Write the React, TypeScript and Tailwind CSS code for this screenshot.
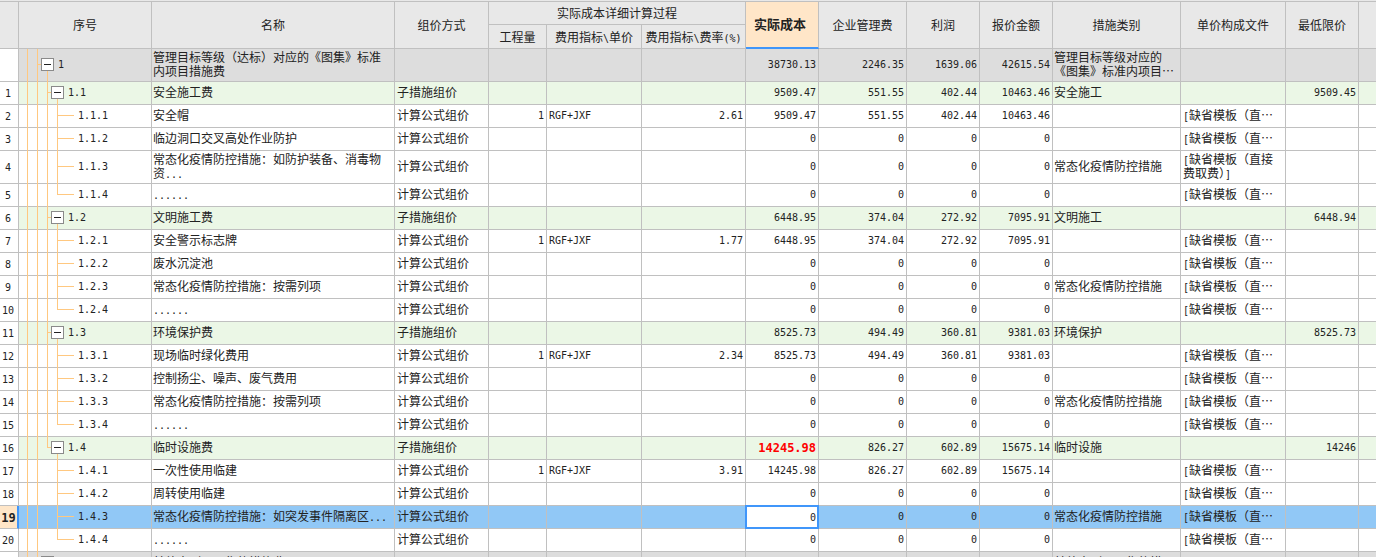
import { Fragment } from "react";
import { clsx } from "clsx";

type Kind = "root" | "section" | "item";

interface Row {
  no: string;
  kind: Kind;
  code: string;
  name: string;
  method?: string;
  qty?: string;
  basis?: string;
  rate?: string;
  amounts: string[];
  category?: string;
  template?: string;
  floor?: string;
  last?: boolean;
  tall?: boolean;
  alert?: boolean;
  selected?: boolean;
}

const FORMULA = "计算公式组价";
const SUB = "子措施组价";
const TEMPLATE = "[缺省模板（直…";
const EPIDEMIC = "常态化疫情防控措施";
const ZERO = ["0", "0", "0", "0"];

const rows: Row[] = [
  { no: "", kind: "root", code: "1", name: "管理目标等级（达标）对应的《图集》标准\n内项目措施费", amounts: ["38730.13", "2246.35", "1639.06", "42615.54"], category: "管理目标等级对应的\n《图集》标准内项目…", tall: true },
  { no: "1", kind: "section", code: "1.1", name: "安全施工费", method: SUB, amounts: ["9509.47", "551.55", "402.44", "10463.46"], category: "安全施工", floor: "9509.45" },
  { no: "2", kind: "item", code: "1.1.1", name: "安全帽", method: FORMULA, qty: "1", basis: "RGF+JXF", rate: "2.61", amounts: ["9509.47", "551.55", "402.44", "10463.46"], template: TEMPLATE },
  { no: "3", kind: "item", code: "1.1.2", name: "临边洞口交叉高处作业防护", method: FORMULA, amounts: ZERO, template: TEMPLATE },
  { no: "4", kind: "item", code: "1.1.3", name: "常态化疫情防控措施：如防护装备、消毒物\n资...", method: FORMULA, amounts: ZERO, category: EPIDEMIC, template: "[缺省模板（直接\n费取费）]", tall: true },
  { no: "5", kind: "item", code: "1.1.4", name: "......", method: FORMULA, amounts: ZERO, template: TEMPLATE, last: true },
  { no: "6", kind: "section", code: "1.2", name: "文明施工费", method: SUB, amounts: ["6448.95", "374.04", "272.92", "7095.91"], category: "文明施工", floor: "6448.94" },
  { no: "7", kind: "item", code: "1.2.1", name: "安全警示标志牌", method: FORMULA, qty: "1", basis: "RGF+JXF", rate: "1.77", amounts: ["6448.95", "374.04", "272.92", "7095.91"], template: TEMPLATE },
  { no: "8", kind: "item", code: "1.2.2", name: "废水沉淀池", method: FORMULA, amounts: ZERO, template: TEMPLATE },
  { no: "9", kind: "item", code: "1.2.3", name: "常态化疫情防控措施：按需列项", method: FORMULA, amounts: ZERO, category: EPIDEMIC, template: TEMPLATE },
  { no: "10", kind: "item", code: "1.2.4", name: "......", method: FORMULA, amounts: ZERO, template: TEMPLATE, last: true },
  { no: "11", kind: "section", code: "1.3", name: "环境保护费", method: SUB, amounts: ["8525.73", "494.49", "360.81", "9381.03"], category: "环境保护", floor: "8525.73" },
  { no: "12", kind: "item", code: "1.3.1", name: "现场临时绿化费用", method: FORMULA, qty: "1", basis: "RGF+JXF", rate: "2.34", amounts: ["8525.73", "494.49", "360.81", "9381.03"], template: TEMPLATE },
  { no: "13", kind: "item", code: "1.3.2", name: "控制扬尘、噪声、废气费用", method: FORMULA, amounts: ZERO, template: TEMPLATE },
  { no: "14", kind: "item", code: "1.3.3", name: "常态化疫情防控措施：按需列项", method: FORMULA, amounts: ZERO, category: EPIDEMIC, template: TEMPLATE },
  { no: "15", kind: "item", code: "1.3.4", name: "......", method: FORMULA, amounts: ZERO, template: TEMPLATE, last: true },
  { no: "16", kind: "section", code: "1.4", name: "临时设施费", method: SUB, amounts: ["14245.98", "826.27", "602.89", "15675.14"], category: "临时设施", floor: "14246", last: true, alert: true },
  { no: "17", kind: "item", code: "1.4.1", name: "一次性使用临建", method: FORMULA, qty: "1", basis: "RGF+JXF", rate: "3.91", amounts: ["14245.98", "826.27", "602.89", "15675.14"], template: TEMPLATE },
  { no: "18", kind: "item", code: "1.4.2", name: "周转使用临建", method: FORMULA, amounts: ZERO, template: TEMPLATE },
  { no: "19", kind: "item", code: "1.4.3", name: "常态化疫情防控措施：如突发事件隔离区...", method: FORMULA, amounts: ZERO, category: EPIDEMIC, template: TEMPLATE, selected: true },
  { no: "20", kind: "item", code: "1.4.4", name: "......", method: FORMULA, amounts: ZERO, template: TEMPLATE, last: true },
  { no: "", kind: "root", code: "2", name: "其他未列入图集的措施费", amounts: [], category: "其他未列入图集的措…" },
];

const MONO = "font-['DejaVu_Sans_Mono',monospace] text-[10px]";
const MONO_BOLD = "font-['DejaVu_Sans_Mono',monospace] text-[12px] font-bold";
const LINE = "border-r border-b border-[#c0c0c0]";
const HEAD = "border-r border-b border-[#c0c0c0] bg-[#e8e8e8] p-0 text-center font-normal";
const CELL = "border-r border-b border-[#c0c0c0] pt-0 pb-0.5 pl-px pr-0.5 whitespace-pre";

// Latin runs take the narrow monospace face, everything else the CJK face
function Mixed({ text }: { text: string }) {
  return (
    <>
      {text.split(/([\x21-\x7e]+)/).map((part, i) =>
        i % 2 ? (
          <span key={i} className={clsx(MONO, "leading-none")}>
            {part}
          </span>
        ) : (
          <Fragment key={i}>{part}</Fragment>
        )
      )}
    </>
  );
}

function TreeGuides({ row, inLastSection }: { row: Row; inLastSection: boolean }) {
  const h = row.tall ? 33 : 23;
  const mid = (h - 3) / 2;
  let d = `M8.5 0V${h}M18.5 0V${h}`;
  if (row.kind === "root") d += `M18 ${mid + 0.5}H22M28.5 ${mid + 6}V${h}`;
  if (row.kind === "section") d += `M28.5 0V${row.last ? mid + 1 : h}M28 ${mid + 0.5}H32M38.5 ${mid + 6}V${h}`;
  if (row.kind === "item") {
    if (!inLastSection) d += `M28.5 0V${h}`;
    d += `M38.5 0V${row.last ? mid + 1 : h}M38 ${mid + 0.5}H55`;
  }
  return (
    <svg width="60" height={h} className="col-start-1 row-start-1 -mb-px block" aria-hidden="true">
      <path d={d} fill="none" stroke="#ffc880" />
    </svg>
  );
}

function TreeCell({ row }: { row: Row }) {
  return (
    <td className={clsx(LINE, "p-0")}>
      <div className={clsx("grid", row.tall ? "h-8" : "h-[22px]")}>
        <TreeGuides row={row} inLastSection={row.code.startsWith("1.4")} />
        <div
          className={clsx(
            "col-start-1 row-start-1 flex items-center gap-1",
            row.tall ? "h-[31px]" : "h-[21px]",
            row.kind === "root" && "pl-[22px]",
            row.kind === "section" && "pl-8",
            row.kind === "item" && "pl-[59px]"
          )}
        >
          {row.kind !== "item" && (
            <button
              aria-label={`折叠 ${row.code}`}
              className="flex size-[13px] items-center justify-center border border-[#8a8a8a] bg-white"
            >
              <span className="h-px w-[7px] bg-[#222]" />
            </button>
          )}
          <span className={MONO}>{row.code}</span>
        </div>
      </div>
    </td>
  );
}

function Amount({ value, alert }: { value?: string; alert?: boolean }) {
  return (
    <td
      className={clsx(
        LINE,
        "py-0 pl-0 pr-0.5 text-right",
        alert ? MONO_BOLD : MONO,
        alert && "text-[#f00]"
      )}
    >
      {value}
    </td>
  );
}

function DataRow({ row }: { row: Row }) {
  return (
    <tr
      className={clsx(
        row.tall ? "h-[33px]" : "h-[23px]",
        row.selected && "bg-[#91c8f6]",
        !row.selected && row.kind === "root" && "bg-[#ddd]",
        !row.selected && row.kind === "section" && "bg-[#ebf7e6]",
        !row.selected && row.kind === "item" && "bg-white"
      )}
    >
      <th
        scope="row"
        className={clsx(
          "border-b border-b-[#c0c0c0] pt-0.5 pb-0 pl-0 text-center",
          row.selected ? MONO_BOLD : MONO,
          row.selected
            ? "border-r-2 border-r-[#4096fa] bg-[#ffe6c8] pr-0"
            : "border-r border-r-[#c0c0c0] bg-white pr-0.5 font-normal"
        )}
      >
        {row.no}
      </th>
      <TreeCell row={row} />
      <td className={CELL}><Mixed text={row.name} /></td>
      <td className={clsx(LINE, "pt-0 pb-0.5 pl-0.5 pr-0")}>{row.method}</td>
      <Amount value={row.qty} />
      <td className={clsx(LINE, MONO, "py-0 pl-0.5 pr-0")}>{row.basis}</td>
      <Amount value={row.rate} />
      {row.selected ? (
        <td className={clsx(LINE, "p-0")}>
          <input
            aria-label="实际成本"
            defaultValue={row.amounts[0]}
            className={clsx(
              MONO,
              "relative block h-[22px] w-full bg-white py-0 pr-0.5 text-right outline-2 -outline-offset-1 outline-[#4096fa]"
            )}
          />
        </td>
      ) : (
        <Amount value={row.amounts[0]} alert={row.alert} />
      )}
      <Amount value={row.amounts[1]} />
      <Amount value={row.amounts[2]} />
      <Amount value={row.amounts[3]} />
      <td className={CELL}>{row.category}</td>
      <td className={clsx(LINE, "pt-0 pb-0.5 pl-0.5 pr-0 whitespace-pre")}>
        {row.template && <Mixed text={row.template} />}
      </td>
      <Amount value={row.floor} />
      <td className="border-b border-[#c0c0c0] p-0" />
    </tr>
  );
}

export default function App() {
  return (
    <main className="h-screen overflow-hidden bg-[#e8e8e8] pt-px font-['Noto_Sans_CJK_SC',sans-serif] text-[12px] leading-[14px] text-[#222]">
      <table className="w-full table-fixed border-separate border-spacing-0 border-t border-[#c0c0c0]">
        <colgroup>
          <col className="w-[19px]" />
          <col className="w-[133px]" />
          <col className="w-[243px]" />
          <col className="w-[94px]" />
          <col className="w-[58px]" />
          <col className="w-[95px]" />
          <col className="w-[104px]" />
          <col className="w-[73px]" />
          <col className="w-[88px]" />
          <col className="w-[73px]" />
          <col className="w-[73px]" />
          <col className="w-[128px]" />
          <col className="w-[105px]" />
          <col className="w-[73px]" />
          <col />
        </colgroup>
        <thead>
          <tr className="h-[23px]">
            <th rowSpan={2} className={HEAD} />
            <th rowSpan={2} className={HEAD}>序号</th>
            <th rowSpan={2} className={HEAD}>名称</th>
            <th rowSpan={2} className={HEAD}>组价方式</th>
            <th colSpan={3} className={HEAD}>实际成本详细计算过程</th>
            <th
              rowSpan={2}
              className="border-r border-b-2 border-r-[#c0c0c0] border-b-[#4096fa] bg-[#ffe6c8] pt-0 pr-1 pb-0.5 pl-0 text-center text-[13px] font-bold"
            >
              实际成本
            </th>
            <th rowSpan={2} className={HEAD}>企业管理费</th>
            <th rowSpan={2} className={HEAD}>利润</th>
            <th rowSpan={2} className={HEAD}>报价金额</th>
            <th rowSpan={2} className={HEAD}>措施类别</th>
            <th rowSpan={2} className={HEAD}>单价构成文件</th>
            <th rowSpan={2} className={HEAD}>最低限价</th>
            <th rowSpan={2} className="border-b border-[#c0c0c0] bg-[#e8e8e8] p-0" />
          </tr>
          <tr className="h-6">
            <th className={HEAD}>工程量</th>
            <th className={HEAD}><Mixed text="费用指标\单价" /></th>
            <th className={HEAD}><Mixed text="费用指标\费率(%)" /></th>
          </tr>
        </thead>
        <tbody>
          {rows.map((row, i) => (
            <DataRow key={i} row={row} />
          ))}
        </tbody>
      </table>
    </main>
  );
}
